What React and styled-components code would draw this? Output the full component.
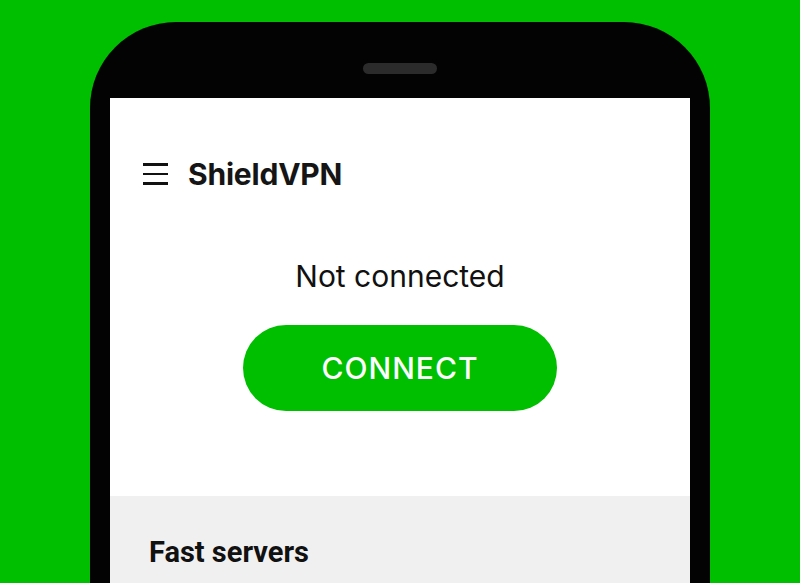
import styled, { createGlobalStyle } from 'styled-components';

const GlobalStyle = createGlobalStyle`
    html, body {
        margin: 0;
        padding: 0;
        background: #00bf00;
        overflow: hidden;
    }
`;

const Page = styled.div`
    height: 583px;
    padding: 22px 90px 0;
    box-sizing: border-box;
    overflow: hidden;
`;

const Phone = styled.div`
    background: #030303;
    border-radius: 86px 86px 0 0;
    padding: 0 20px;
    height: 700px;
    display: flex;
    flex-direction: column;
`;

const Bezel = styled.div`
    height: 76px;
    display: flex;
    justify-content: center;
    padding-top: 41px;
    box-sizing: border-box;
`;

const Speaker = styled.div`
    width: 74px;
    height: 11px;
    border-radius: 6px;
    background: #2b2b2b;
`;

const Screen = styled.div`
    background: #fff;
    flex: 1;
    display: flex;
    flex-direction: column;
`;

const TopBar = styled.div`
    display: flex;
    align-items: center;
    gap: 20px;
    padding: 58px 0 0 33px;
    height: 36px;
`;

const Burger = styled.div`
    width: 25px;
    display: flex;
    flex-direction: column;
    gap: 6.8px;
    span {
        height: 2.7px;
        background: #111;
    }
`;

const Title = styled.h1`
    margin: 0;
    font-family: Inter, "Noto Sans", sans-serif;
    font-weight: 700;
    font-size: 30px;
    line-height: 36px;
    letter-spacing: -0.2px;
    color: #151515;
`;

const Status = styled.div`
    display: flex;
    flex-direction: column;
    align-items: center;
    padding-top: 66px;
    height: 304px;
    box-sizing: border-box;
`;

const StatusText = styled.p`
    margin: 0;
    font-family: Inter, "Noto Sans", sans-serif;
    font-size: 30px;
    color: #111;
    line-height: 36px;
`;

const ConnectButton = styled.button`
    margin-top: 31px;
    width: 314px;
    height: 86px;
    border: none;
    border-radius: 43px;
    background: #00bf00;
    color: #fff;
    font-family: Inter, "Noto Sans", sans-serif;
    font-size: 30px;
    font-weight: 500;
    letter-spacing: 1px;
    cursor: pointer;
`;

const Servers = styled.section`
    background: #f0f0f0;
    flex: 1;
    padding: 39px 39px;
`;

const ServersTitle = styled.h2`
    margin: 0;
    font-family: Roboto, sans-serif;
    font-weight: 700;
    font-size: 29px;
    line-height: 34px;
    color: #111;
`;

const App = () => {
    return (
        <>
            <GlobalStyle />
            <Page>
                <Phone>
                    <Bezel>
                        <Speaker />
                    </Bezel>
                    <Screen>
                        <TopBar>
                            <Burger>
                                <span />
                                <span />
                                <span />
                            </Burger>
                            <Title>ShieldVPN</Title>
                        </TopBar>
                        <Status>
                            <StatusText>Not connected</StatusText>
                            <ConnectButton>CONNECT</ConnectButton>
                        </Status>
                        <Servers>
                            <ServersTitle>Fast servers</ServersTitle>
                        </Servers>
                    </Screen>
                </Phone>
            </Page>
        </>
    );
};

export default App;
